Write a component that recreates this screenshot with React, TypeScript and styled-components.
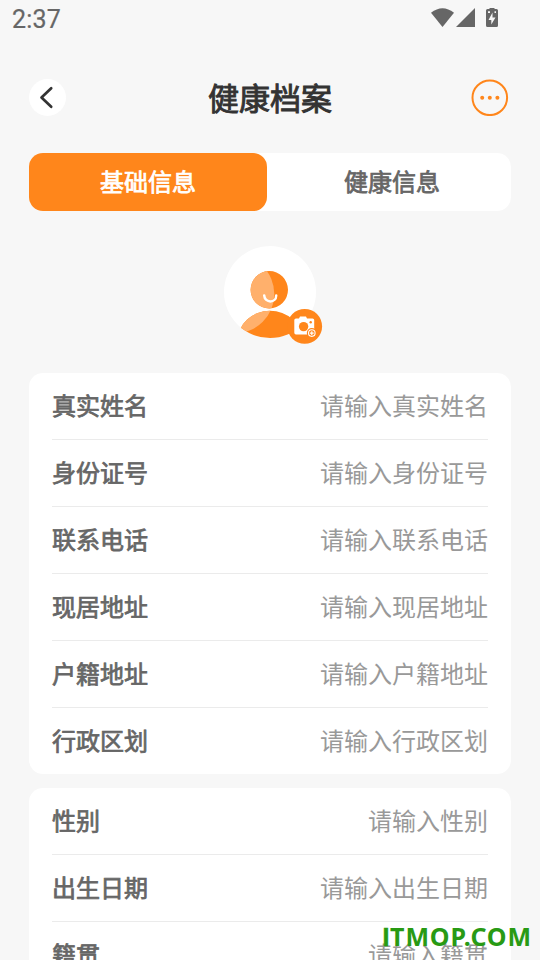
import React from "react";
import styled, { createGlobalStyle } from "styled-components";

const GlobalStyle = createGlobalStyle`
  * { box-sizing: border-box; }
  html, body { margin: 0; padding: 0; height: 100%; overflow: hidden; background: #f7f7f7; }
  body { font-family: "Noto Sans CJK SC", sans-serif; }
  svg { display: block; }
`;

const Page = styled.div`
  position: relative;
  display: flex;
  flex-direction: column;
  width: 540px;
  height: 960px;
  padding: 0 29px;
  overflow: hidden;
  background: #f7f7f7;
`;

const StatusBar = styled.div`
  display: flex;
  flex: none;
  align-items: center;
  justify-content: space-between;
  height: 40px;
  margin: 0 -29px;
  padding: 0 40px 0 12px;
`;

const Clock = styled.span`
  font: 400 25px/40px Roboto, sans-serif;
  letter-spacing: 0.2px;
  -webkit-text-stroke: 0.2px #666;
  color: #666;
`;

const Header = styled.header`
  display: flex;
  flex: none;
  align-items: center;
  justify-content: space-between;
  height: 60px;
  margin-top: 27px;
  padding-right: 2px;
`;

const Title = styled.h1`
  margin: 0;
  padding-left: 2px;
  font-size: 31px;
  line-height: 60px;
  font-weight: 400;
  -webkit-text-stroke: 0.9px currentColor;
  color: #333;
`;

const IconButton = styled.button`
  width: 38px;
  height: 38px;
  padding: 0;
  border: 0;
  background: none;
`;

const Tabs = styled.nav`
  display: flex;
  flex: none;
  height: 58px;
  margin-top: 26px;
  border-radius: 14px;
  background: #fff;
`;

const Tab = styled.button<{ $active?: boolean }>`
  flex: ${(p) => (p.$active ? "0 0 238px" : "1")};
  padding: 0 0 2px ${(p) => (p.$active ? "0" : "6px")};
  border: 0;
  border-radius: 14px;
  background: ${(p) => (p.$active ? "#ff861b" : "transparent")};
  color: ${(p) => (p.$active ? "#fff" : "#666")};
  font: 400 24px/56px "Noto Sans CJK SC", sans-serif;
  -webkit-text-stroke: 0.75px currentColor;
`;

const AvatarArea = styled.div`
  display: flex;
  flex: none;
  justify-content: center;
  height: 127px;
  margin: 35px 0 0;
  padding-left: 6px;
`;

const Card = styled.section`
  flex: none;
  margin-bottom: 14px;
  padding: 0 23px;
  border-radius: 14px;
  background: #fff;
`;

const Row = styled.label`
  display: flex;
  align-items: flex-start;
  justify-content: space-between;
  height: 67px;
  border-bottom: 1px solid #ebebeb;
  font-size: 24px;
  line-height: 64px;
  &:last-child { height: 66px; border-bottom: 0; }
`;

const Label = styled.span`
  font-weight: 400;
  -webkit-text-stroke: 0.75px currentColor;
  color: #666;
`;

const Hint = styled.span`
  font-weight: 400;
  color: #999;
`;

const Watermark = styled.div`
  position: absolute;
  right: 8px;
  bottom: 5px;
  font: 700 25px/36px "Noto Sans", sans-serif;
  letter-spacing: 0.9px;
  white-space: nowrap;
  color: #289a14;
`;

const PlainCapital = styled.span`
  font-family: "Liberation Sans", sans-serif;
  letter-spacing: 0.5px;
  -webkit-text-stroke: 0.5px currentColor;
`;

const StatusIcons = () => (
  <svg width="72" height="24" viewBox="428 8 72 24" fill="#666">
    <path d="M431 12.800Q442.500 3.600 454 12.800L442.500 27Z" />
    <path d="M475 8V27H456Z" />
    <path fillRule="evenodd" d="M489.500 7h5v2h2a1.500 1.500 0 0 1 1.500 1.500V25.500a1.500 1.500 0 0 1-1.500 1.500h-9a1.500 1.500 0 0 1-1.500-1.500V10.500a1.500 1.500 0 0 1 1.500-1.500h2zM492.500 12.500l-4 7.500h2.800v4.500l4.200-7h-3z" />
    <path d="M488 11.200h2v1.700h-2zM494.500 11.200h1.500v1.700h-1.500z" fill="#f7f7f7" />
  </svg>
);

const BackIcon = () => (
  <svg width="38" height="38" viewBox="29 78 38 38">
    <circle cx="47.500" cy="97.500" r="18.500" fill="#fff" />
    <path d="M51.200 88.200L41.500 97.500L51.200 106.800" fill="none" stroke="#333" strokeWidth="2.700" strokeLinecap="round" strokeLinejoin="round" />
  </svg>
);

const MoreIcon = () => (
  <svg width="38" height="38" viewBox="471 78 38 38" fill="#ff861b">
    <circle cx="489.800" cy="97.800" r="17.300" fill="none" stroke="#ff861b" strokeWidth="2" />
    <circle cx="482.200" cy="97.800" r="2" />
    <circle cx="489.800" cy="97.800" r="2" />
    <circle cx="497.400" cy="97.800" r="2" />
  </svg>
);

const Avatar = () => (
  <svg width="106" height="100" viewBox="220 246 106 100">
    <defs>
      <clipPath id="frame"><circle cx="270" cy="292" r="46" /></clipPath>
      <clipPath id="person">
        <circle cx="269.300" cy="289.800" r="18.700" />
        <ellipse cx="270" cy="340" rx="32" ry="29.300" />
      </clipPath>
    </defs>
    <circle cx="270" cy="292" r="46" fill="#fff" />
    <g clipPath="url(#frame)">
      <g clipPath="url(#person)">
        <rect x="224" y="246" width="92" height="92" fill="#ff861b" />
        <circle cx="235" cy="294" r="39.300" fill="#ffb06c" />
      </g>
    </g>
    <path d="M264.200 295.400c0.500 8 12 8 12 0" fill="none" stroke="#fff" strokeWidth="2.500" strokeLinecap="round" />
    <circle cx="304.700" cy="326.400" r="17.400" fill="#ff861b" />
    <path d="M296 318.400h3l1-2h6l1 2h5.500q1.700 0 1.700 1.700v14.400h-18.200q-1.700 0-1.700-1.700v-12.700q0-1.700 1.700-1.700z" fill="#fff" />
    <circle cx="303.600" cy="326.600" r="4.700" fill="#ff861b" />
    <circle cx="310.700" cy="322.300" r="1.200" fill="#ff861b" />
    <circle cx="311.800" cy="333.100" r="5" fill="#ff861b" />
    <circle cx="311.800" cy="333.100" r="3.300" fill="#ff861b" stroke="#fff" strokeWidth="1.100" />
    <path d="M311.800 331.200v3.800M309.900 333.100h3.800" stroke="#fff" strokeWidth="1.200" />
  </svg>
);

const groups = [
  ["真实姓名", "身份证号", "联系电话", "现居地址", "户籍地址", "行政区划"],
  ["性别", "出生日期", "籍贯"],
];

export default function App() {
  return (
    <Page>
      <GlobalStyle />
      <StatusBar>
        <Clock>2:37</Clock>
        <StatusIcons />
      </StatusBar>
      <Header>
        <IconButton aria-label="返回"><BackIcon /></IconButton>
        <Title>健康档案</Title>
        <IconButton aria-label="更多"><MoreIcon /></IconButton>
      </Header>
      <Tabs>
        <Tab $active>基础信息</Tab>
        <Tab>健康信息</Tab>
      </Tabs>
      <AvatarArea><Avatar /></AvatarArea>
      {groups.map((fields) => (
        <Card key={fields[0]}>
          {fields.map((name) => (
            <Row key={name}>
              <Label>{name}</Label>
              <Hint>请输入{name}</Hint>
            </Row>
          ))}
        </Card>
      ))}
      <Watermark><PlainCapital>I</PlainCapital>TMOP.COM</Watermark>
    </Page>
  );
}
